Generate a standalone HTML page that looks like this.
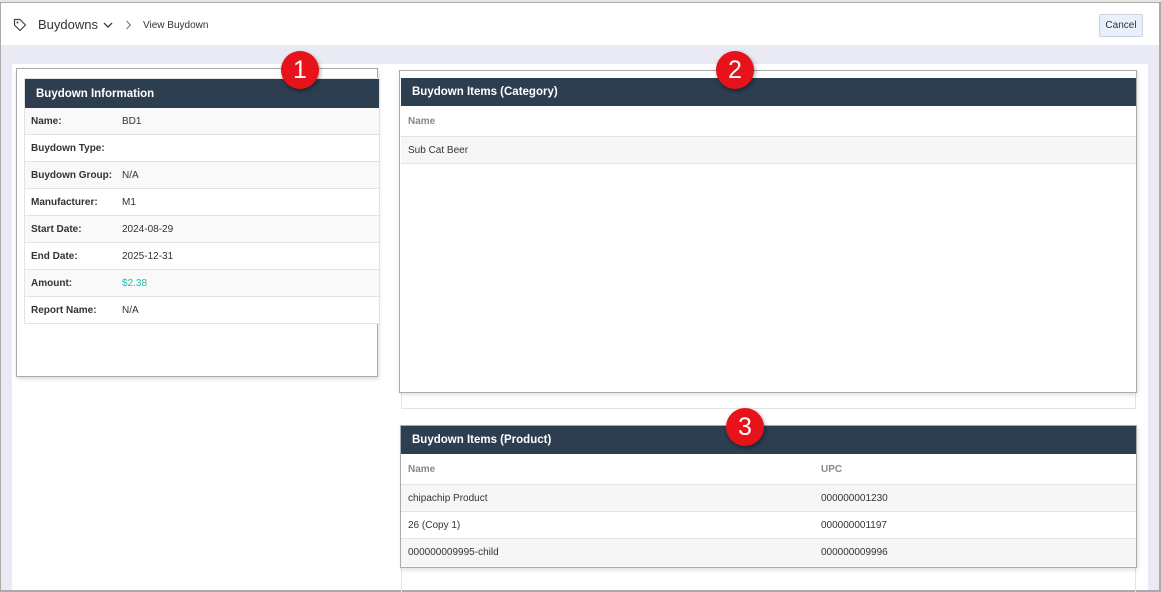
<!DOCTYPE html>
<html><head><style>
*{box-sizing:border-box;margin:0;padding:0}
body{width:1161px;height:592px;position:relative;overflow:hidden;background:#fff;font-family:"Liberation Sans",Arial,sans-serif;font-size:10px;color:#333}
.a{position:absolute}
.hd{background:#2c3e50;color:#fff;font-weight:bold;font-size:11.5px;padding-left:11px;display:flex;align-items:center}
.row{position:absolute;left:0;right:0;height:27px;border-bottom:1px solid #e3e3e3;display:flex;align-items:center}
.lbl{width:97px;padding-left:6px;font-weight:bold}
.badge{position:absolute;width:38px;height:38px;border-radius:50%;background:#e8121a;color:#fff;font-size:25px;text-align:center;line-height:38px;box-shadow:1px 2px 4px rgba(0,0,0,.4);font-family:"Liberation Sans",sans-serif}
</style></head><body>
<div class="a" style="left:0;top:0;width:1161px;height:3px;background:#e6e6e6"></div>
<div class="a" style="left:0;top:2px;width:1161px;height:1px;background:#aaa"></div>
<div class="a" style="left:0;top:45px;width:1161px;height:547px;background:#e9eaf3"></div>
<div class="a" style="left:12px;top:64px;width:1136px;height:528px;background:#fff"></div>
<div class="a" style="left:0;top:3px;width:1px;height:589px;background:#aaa"></div>
<div class="a" style="left:1159px;top:3px;width:2px;height:589px;background:#aaa"></div>
<div class="a" style="left:0;top:590px;width:1161px;height:2px;background:#aaa"></div>
<svg class="a" style="left:13px;top:18px" width="14" height="14" viewBox="0 0 14 14"><path d="M1.5 1.5h5.5l5.5 5.5-5.5 5.5-5.5-5.5z" fill="none" stroke="#444" stroke-width="1.2" stroke-linejoin="round"/><circle cx="4.5" cy="4.5" r="1" fill="#444"/></svg>
<div class="a" style="left:38px;top:17px;font-size:13px;color:#333">Buydowns</div>
<svg class="a" style="left:103px;top:22px" width="10" height="7"><path d="M1 1l4 4 4-4" fill="none" stroke="#444" stroke-width="1.4"/></svg>
<svg class="a" style="left:125px;top:20px" width="7" height="10"><path d="M1.5 1l4 4-4 4" fill="none" stroke="#777" stroke-width="1.1"/></svg>
<div class="a" style="left:143px;top:20px;font-size:10px;color:#333">View Buydown</div>
<div class="a" style="left:1099px;top:14px;width:44px;height:23px;border:1px solid #c9d4de;border-radius:2px;background:#e8f1fb;font-size:10px;text-align:center;line-height:21px">Cancel</div>
<div class="a" style="left:16px;top:68px;width:362px;height:309px;border:1px solid #aaa;box-shadow:1px 2px 4px rgba(0,0,0,.15);background:#fff"></div>
<div class="a" style="left:24px;top:78px;width:356px;height:246px;border:1px solid #e3e3e3;background:#fff">
<div class="hd" style="height:29px">Buydown Information</div>
<div class="row" style="top:29px;background:#f9f9f9"><span class="lbl">Name:</span>BD1</div>
<div class="row" style="top:56px"><span class="lbl">Buydown Type:</span></div>
<div class="row" style="top:83px;background:#f9f9f9"><span class="lbl">Buydown Group:</span>N/A</div>
<div class="row" style="top:110px"><span class="lbl">Manufacturer:</span>M1</div>
<div class="row" style="top:137px;background:#f9f9f9"><span class="lbl">Start Date:</span>2024-08-29</div>
<div class="row" style="top:164px"><span class="lbl">End Date:</span>2025-12-31</div>
<div class="row" style="top:191px;background:#f9f9f9"><span class="lbl">Amount:</span><span style="color:#1fbfb0">$2.38</span></div>
<div class="row" style="top:218px"><span class="lbl">Report Name:</span>N/A</div>
</div>
<div class="a" style="left:401px;top:72px;width:735px;height:337px;border:1px solid #e3e3e3"></div>
<div class="a" style="left:399px;top:70px;width:738px;height:323px;border:1px solid #aaa;background:#fff;box-shadow:1px 2px 4px rgba(0,0,0,.12)"></div>
<div class="a" style="left:401px;top:78px;width:735px;height:86px">
<div class="hd" style="height:28px">Buydown Items (Category)</div>
<div class="row" style="top:28px;height:31px;color:#888;font-weight:bold;padding-left:7px">Name</div>
<div class="row" style="top:59px;background:#f6f6f6;padding-left:7px">Sub Cat Beer</div>
</div>
<div class="a" style="left:401px;top:440px;width:735px;height:152px;border:1px solid #e3e3e3;border-bottom:none"></div>
<div class="a" style="left:400px;top:425px;width:737px;height:143px;border:1px solid #aaa;background:#fff;box-shadow:1px 2px 4px rgba(0,0,0,.12)">
<div class="hd" style="height:28px">Buydown Items (Product)</div>
<div class="row" style="top:28px;height:31px;color:#888;font-weight:bold"><span style="width:420px;padding-left:7px">Name</span>UPC</div>
<div class="row" style="top:59px;background:#f6f6f6"><span style="width:420px;padding-left:7px">chipachip Product</span>000000001230</div>
<div class="row" style="top:86px"><span style="width:420px;padding-left:7px">26 (Copy 1)</span>000000001197</div>
<div class="row" style="top:113px;background:#f6f6f6;border-bottom:none"><span style="width:420px;padding-left:7px">000000009995-child</span>000000009996</div>
</div>
<div class="badge" style="left:281px;top:51px">1</div>
<div class="badge" style="left:716px;top:51px">2</div>
<div class="badge" style="left:726px;top:408px">3</div>
</body></html>
